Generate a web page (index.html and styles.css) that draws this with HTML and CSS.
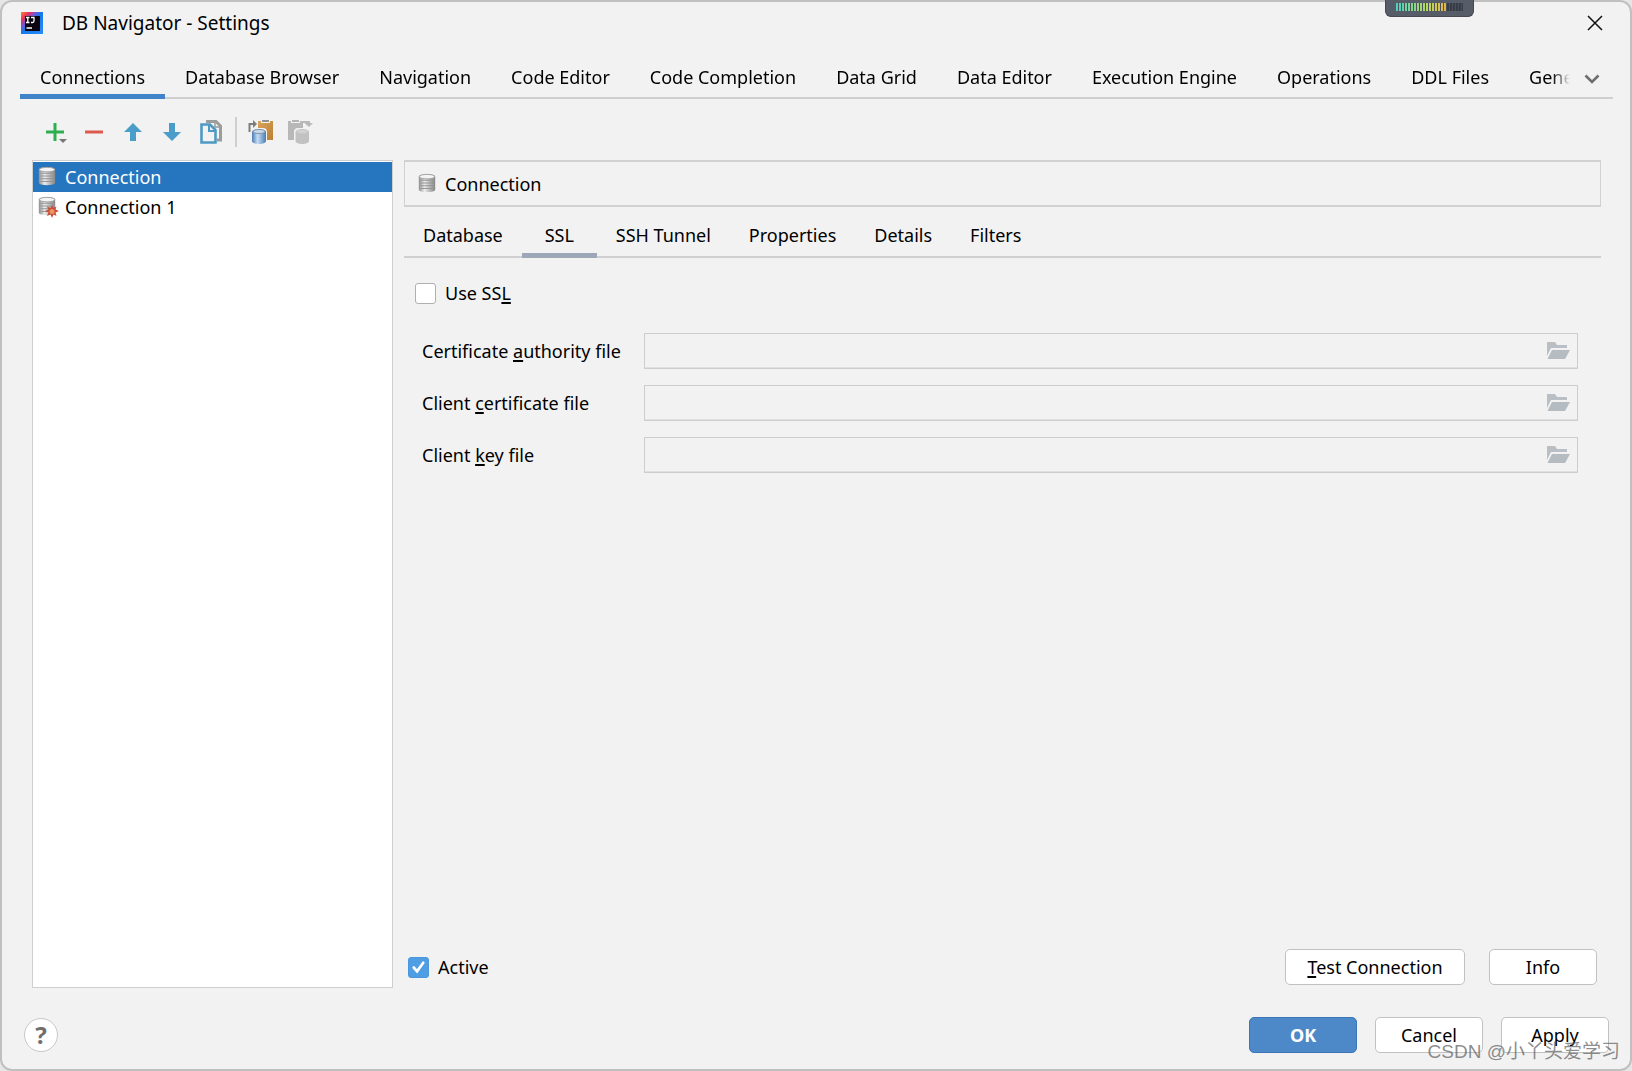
FILE: index.html
```html
<!DOCTYPE html>
<html lang="en">
<head>
<meta charset="utf-8">
<title>DB Navigator - Settings</title>
<link rel="stylesheet" href="styles.css">
</head>
<body>
<svg class="defs" aria-hidden="true">
  <defs>
    <linearGradient id="metal"><stop offset="0" stop-color="#8d8d8d"/><stop offset=".35" stop-color="#ececec"/><stop offset="1" stop-color="#858585"/></linearGradient>
    <linearGradient id="blueCan"><stop offset="0" stop-color="#4a7cb4"/><stop offset=".4" stop-color="#c4dcf5"/><stop offset="1" stop-color="#4a7cb4"/></linearGradient>
    <linearGradient id="ijBg" x1="0" y1="0" x2="1" y2="1"><stop offset="0" stop-color="#f68b2c"/><stop offset=".2" stop-color="#e8305f"/><stop offset=".36" stop-color="#7256d8"/><stop offset=".48" stop-color="#1478ec"/><stop offset="1" stop-color="#2a8cf8"/></linearGradient>
    <linearGradient id="wood" x1="0" y1="0" x2="1" y2="1"><stop offset="0" stop-color="#dca55a"/><stop offset="1" stop-color="#b97f32"/></linearGradient>
    <symbol id="cylinder" viewBox="0 0 20 22">
      <path d="M1 4C1 0 19 0 19 4V18.500C19 22 1 22 1 18.500Z" fill="url(#metal)"/>
      <path d="M3 8H17M3 11H17M3 14H17M3 17H17" fill="none" stroke="#8f8f8f"/>
      <ellipse cx="10" cy="4" rx="8.500" ry="2.500" fill="#f4f4f4" stroke="#9a9a9a"/>
    </symbol>
    <symbol id="folder" viewBox="0 0 24 18">
      <path d="M0 0H8L10 3H20V6H4L0 14Z" fill="#b9bfc4"/>
      <path d="M5 8H23L18 17H0.500Z" fill="#b4bbc1"/>
    </symbol>
  </defs>
</svg>
<main class="window">
  <div class="meter" aria-hidden="true"><span class="meter-bars"></span></div>
  <header class="titlebar">
    <svg class="logo" viewBox="0 0 22 22" aria-hidden="true"><rect width="22" height="22" fill="url(#ijBg)"/><rect x="4" y="4" width="15" height="15" fill="#0a0410"/><path d="M5 5.500H8.500M6.800 5.500V10.500M5 10.500H8.500M10 5.500H13V9Q13 10.500 11.500 10.500H10" fill="none" stroke="#fff" stroke-width="1.300"/><path d="M5.500 16H11" stroke="#fff" stroke-width="1.500"/></svg>
    <h1 class="title">DB Navigator - Settings</h1>
    <button class="close" type="button" aria-label="Close"><svg width="16" height="16" viewBox="0 0 16 16"><path d="M1 1L15 15M15 1L1 15" stroke="#111" stroke-width="1.500"/></svg></button>
  </header>
  <nav class="tabs main-tabs">
    <div class="tab-strip" role="tablist">
      <button class="tab active" role="tab" type="button">Connections</button>
      <button class="tab" role="tab" type="button">Database Browser</button>
      <button class="tab" role="tab" type="button">Navigation</button>
      <button class="tab" role="tab" type="button">Code Editor</button>
      <button class="tab" role="tab" type="button">Code Completion</button>
      <button class="tab" role="tab" type="button">Data Grid</button>
      <button class="tab" role="tab" type="button">Data Editor</button>
      <button class="tab" role="tab" type="button">Execution Engine</button>
      <button class="tab" role="tab" type="button">Operations</button>
      <button class="tab" role="tab" type="button">DDL Files</button>
      <button class="tab" role="tab" type="button">General</button>
    </div>
    <button class="more" type="button" aria-label="More tabs"><svg width="16" height="10" viewBox="0 0 16 10"><path d="M1.500 1.500L8 8L14.500 1.500" fill="none" stroke="#6e6e6e" stroke-width="2.600"/></svg></button>
  </nav>
  <div class="toolbar">
    <button class="tool" type="button" aria-label="Add"><svg viewBox="0 0 26 26"><path d="M13 4V22M4 13H22" stroke="#2fae50" stroke-width="3"/><path d="M17 20H25L21 24Z" fill="#777"/></svg></button>
    <button class="tool" type="button" aria-label="Remove"><svg viewBox="0 0 26 26"><path d="M4 13H22" stroke="#dc5a4c" stroke-width="3"/></svg></button>
    <button class="tool" type="button" aria-label="Move up"><svg viewBox="0 0 26 26"><path d="M13 4L22 13H16V22H10V13H4Z" fill="#4a9dc9"/></svg></button>
    <button class="tool" type="button" aria-label="Move down"><svg viewBox="0 0 26 26"><path d="M13 22L22 13H16V4H10V13H4Z" fill="#4a9dc9"/></svg></button>
    <button class="tool" type="button" aria-label="Duplicate"><svg viewBox="0 0 26 26"><path d="M8 2.500H18L22.500 7V21H19" fill="none" stroke="#9c9c9c" stroke-width="3"/><path d="M17 2V8H23" fill="none" stroke="#9c9c9c" stroke-width="1.500"/><path d="M3.500 5.500H12L17.500 11V23.500H3.500Z" fill="#f2f2f2" stroke="#4e9ac4" stroke-width="2.600"/><path d="M11 6V12H17" fill="none" stroke="#4e9ac4" stroke-width="2"/></svg></button>
    <span class="separator"></span>
    <button class="tool" type="button" aria-label="Paste connection"><svg viewBox="0 0 26 26"><path d="M10 2H25V21H10Z" fill="url(#wood)"/><path d="M13 0H22V4H13Z" fill="#f2f2f2"/><path d="M14 1H21V3H14Z" fill="#929292"/><path d="M1.500 13V5H6" fill="none" stroke="#7d7d7d" stroke-width="2"/><path d="M5 1L9 5L5 9Z" fill="#7d7d7d"/><rect x="3" y="9" width="16" height="17" rx="4" fill="#f2f2f2"/><path d="M4 13C4 9 18 9 18 13V22C18 26 4 26 4 22Z" fill="url(#blueCan)"/><ellipse cx="11" cy="12.500" rx="6" ry="2" fill="#c9d9ea" stroke="#7f93aa"/></svg></button>
    <button class="tool" type="button" aria-label="Copy connection" disabled><svg viewBox="0 0 26 26"><path d="M1 2H16V21H1Z" fill="#b8b8b8"/><path d="M4 0H13V4H4Z" fill="#f2f2f2"/><path d="M5 1H12V3H5Z" fill="#b5b5b5"/><path d="M16 3H22V5" fill="none" stroke="#b8b8b8" stroke-width="2"/><path d="M17.500 4H26L22 8Z" fill="#b8b8b8"/><rect x="7" y="9" width="17" height="17" rx="4" fill="#f2f2f2"/><path d="M8.500 13C8.500 9 22 9 22 13V22C22 26 8.500 26 8.500 22Z" fill="#c2c2c2"/><ellipse cx="15.200" cy="12.500" rx="5.500" ry="1.800" fill="#d2d2d2"/></svg></button>
  </div>
  <div class="content">
    <ul class="connections" role="listbox" aria-label="Connections">
      <li class="connection selected" role="option" aria-selected="true"><svg class="db-icon" viewBox="0 0 22 22"><use href="#cylinder" width="20" height="20"/></svg>Connection</li>
      <li class="connection" role="option" aria-selected="false"><svg class="db-icon" viewBox="0 0 22 22"><use href="#cylinder" width="20" height="20"/><path d="M15 9L16.500 12L19.500 10.500L18.500 13.500L22 15L18.500 16.500L19.500 20L16.500 18.500L15 22L13.500 18.500L10 20L11.500 16.500L8 15L11.500 13.500L10 10.500L13.500 12Z" fill="#c94f38"/><circle cx="15" cy="15.500" r="2.500" fill="#ed9463"/></svg>Connection 1</li>
    </ul>
    <section class="detail">
      <div class="name-box"><svg class="db-icon" viewBox="0 0 22 22"><use href="#cylinder" width="20" height="20"/></svg>Connection</div>
      <div class="tabs sub-tabs" role="tablist">
        <button class="tab" role="tab" type="button">Database</button>
        <button class="tab active" role="tab" type="button">SSL</button>
        <button class="tab" role="tab" type="button">SSH Tunnel</button>
        <button class="tab" role="tab" type="button">Properties</button>
        <button class="tab" role="tab" type="button">Details</button>
        <button class="tab" role="tab" type="button">Filters</button>
      </div>
      <label class="check use-ssl"><input type="checkbox"><span>Use SS<u>L</u></span></label>
      <div class="form">
        <label for="ca">Certificate <u>a</u>uthority file</label>
        <div class="file-field"><input id="ca" type="text" disabled><button type="button" aria-label="Browse" disabled><svg width="24" height="18"><use href="#folder"/></svg></button></div>
        <label for="cert">Client <u>c</u>ertificate file</label>
        <div class="file-field"><input id="cert" type="text" disabled><button type="button" aria-label="Browse" disabled><svg width="24" height="18"><use href="#folder"/></svg></button></div>
        <label for="key">Client <u>k</u>ey file</label>
        <div class="file-field"><input id="key" type="text" disabled><button type="button" aria-label="Browse" disabled><svg width="24" height="18"><use href="#folder"/></svg></button></div>
      </div>
      <div class="actions">
        <label class="check"><input type="checkbox" checked><span>Active</span></label>
        <button class="btn wide" type="button"><span><u>T</u>est Connection</span></button>
        <button class="btn" type="button">Info</button>
      </div>
    </section>
  </div>
  <footer class="footer">
    <button class="help" type="button" aria-label="Help">?</button>
    <button class="btn primary" type="button">OK</button>
    <button class="btn" type="button">Cancel</button>
    <button class="btn" type="button">Apply</button>
  </footer>
  <div class="watermark">CSDN @小丫头爱学习</div>
</main>
</body>
</html>
```
FILE: styles.css
```css
* { box-sizing: border-box; }
body {
  margin: 0;
  background: #e6e6e6;
  color: #000;
  font: 18px/30px "Noto Sans", "Open Sans", "Noto Sans CJK SC", sans-serif;
}
button { margin: 0; padding: 0; border: 0; background: none; color: inherit; font: inherit; }
svg { display: block; }
u { text-underline-offset: 2px; text-decoration-thickness: 2px; text-decoration-skip-ink: none; }
.defs { position: absolute; width: 0; height: 0; }
.window {
  position: relative;
  display: flex;
  flex-direction: column;
  min-height: 100vh;
  border: 2px solid #c0c0c0;
  border-radius: 12px;
  background: #f2f2f2;
}
.meter {
  position: absolute;
  top: -2px;
  right: 156px;
  width: 89px;
  height: 17px;
  padding: 3px 10px;
  border: 1px solid #454853;
  border-top: 0;
  border-radius: 0 0 6px 6px;
  background: #575c69;
}
.meter-bars {
  display: block;
  height: 8px;
  background:
    repeating-linear-gradient(90deg, transparent 0 2px, #4c505c 2px 3px),
    linear-gradient(90deg, #4fd0c0, #b8d860 48%, #e6b345 74%, #383c47 74%);
}
.titlebar { display: flex; align-items: center; height: 42px; padding: 0 27px 0 19px; }
.logo { width: 22px; height: 22px; }
.title { flex: 1; margin: 0 0 0 19px; font-size: 19px; font-weight: 400; }
.close { width: 16px; }
.tabs { display: flex; border-bottom: 2px solid #cfcfcf; }
.tab { flex: none; padding: 0 20px; border-bottom: 5px solid transparent; white-space: nowrap; }
.main-tabs { height: 55px; margin: 0 17px 0 18px; }
.tab-strip {
  display: flex;
  flex: 1;
  min-width: 0;
  height: 55px;
  overflow: hidden;
  -webkit-mask: linear-gradient(90deg, #000 calc(100% - 18px), transparent);
  mask: linear-gradient(90deg, #000 calc(100% - 18px), transparent);
}
.main-tabs .tab { padding-top: 18px; padding-bottom: 2px; }
.main-tabs .active { border-color: #4083c9; }
.more { margin: 18px 13px 2px 14px; }
.toolbar { display: flex; align-items: center; gap: 13px; height: 61px; padding: 4px 0 0 40px; }
.tool { width: 26px; height: 26px; }
.separator { width: 2px; height: 30px; margin: 0 -2px 0 -2px; background: #cfcfcf; }
.content { display: flex; flex: 1; gap: 11px; padding: 0 29px 0 30px; }
.connections { flex: none; width: 361px; margin: 0; padding: 1px 0 0; border: 1px solid #cfcfcf; background: #fff; list-style: none; }
.connection { display: flex; align-items: center; gap: 6px; height: 30px; padding-left: 4px; }
.db-icon { width: 22px; height: 22px; }
.selected { background: #2675bf; color: #fff; }
.detail { display: flex; flex: 1; flex-direction: column; min-width: 0; }
.name-box { display: flex; align-items: center; gap: 6px; height: 47px; padding-left: 12px; border: 2px solid #d1d1d1; border-width: 2px 1px; }
.sub-tabs { height: 51px; }
.sub-tabs .tab { min-width: 75px; height: 51px; padding: 10px 19px 0; }
.sub-tabs .active { border-color: #9ca7b8; }
.check { display: flex; align-items: center; gap: 9px; }
.check input {
  width: 21px;
  height: 21px;
  margin: 0;
  border: 1px solid #b0b0b0;
  border-radius: 3px;
  background: #fff;
  appearance: none;
}
.check input:checked {
  border-color: #4b97df;
  background: #4f9ee3 url("data:image/svg+xml,%3Csvg xmlns='http://www.w3.org/2000/svg' viewBox='0 0 20 20'%3E%3Cpath d='M5 10L8.500 14L15 5' fill='none' stroke='white' stroke-width='2.800' stroke-linecap='round'/%3E%3C/svg%3E");
}
.use-ssl { margin: 20px 0 0 11px; }
.form { display: grid; grid-template-columns: 222px 1fr; row-gap: 16px; align-items: center; margin: 25px 23px 0 18px; }
.file-field { display: flex; align-items: center; height: 36px; padding-right: 6px; border: 1px solid #cdcdcd; box-shadow: inset 0 -1px #e0e0e0; }
.file-field input { flex: 1; min-width: 0; height: 32px; padding: 0 6px; border: 0; background: none; font: inherit; }
.actions { display: flex; align-items: center; gap: 24px; margin: auto 4px 3px 4px; }
.actions .check { flex: 1; }
.btn { width: 108px; height: 36px; border: 1px solid #c1c1c1; border-radius: 5px; background: #fff; }
.btn.wide { width: 180px; }
.primary { border-color: #3d76b8; background: #4d89c9; color: #fff; font-weight: 700; }
.footer { display: flex; align-items: center; gap: 18px; height: 81px; padding: 15px 21px 2px 22px; }
.help { width: 34px; height: 34px; margin-right: auto; border: 1px solid #c8c8c8; border-radius: 50%; background: #fff; color: #6e6e6e; font-size: 24px; font-weight: 700; line-height: 30px; }
.watermark {
  position: absolute;
  right: 10px;
  bottom: 2px;
  color: rgba(90, 90, 90, .7);
  font: 19px/30px "Liberation Sans", "Noto Sans CJK SC", sans-serif;
  pointer-events: none;
}
```
